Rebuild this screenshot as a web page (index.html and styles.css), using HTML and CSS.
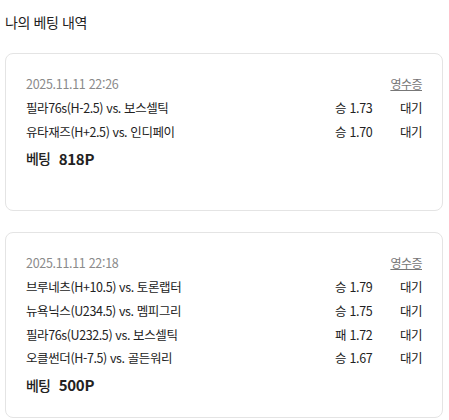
FILE: index.html
```html
<!DOCTYPE html>
<html lang="ko">
<head>
<meta charset="utf-8">
<link rel="stylesheet" href="styles.css">
</head>
<body>
<div class="page">
  <h1 class="title">나의 베팅 내역</h1>
  <div class="card card-min">
    <div class="head">
      <span class="date">2025.11.11 22:26</span>
      <span class="receipt">영수증</span>
    </div>
    <div class="row"><span class="match">필라76s(H-2.5) vs. 보스셀틱</span><span class="odds">승 1.73</span><span class="status">대기</span></div>
    <div class="row"><span class="match">유타재즈(H+2.5) vs. 인디페이</span><span class="odds">승 1.70</span><span class="status">대기</span></div>
    <div class="bet"><span class="bet-label">베팅</span><span class="bet-amount">818P</span></div>
  </div>
  <div class="card">
    <div class="head">
      <span class="date">2025.11.11 22:18</span>
      <span class="receipt">영수증</span>
    </div>
    <div class="row"><span class="match">브루네츠(H+10.5) vs. 토론랩터</span><span class="odds">승 1.79</span><span class="status">대기</span></div>
    <div class="row"><span class="match">뉴욕닉스(U234.5) vs. 멤피그리</span><span class="odds">승 1.75</span><span class="status">대기</span></div>
    <div class="row"><span class="match">필라76s(U232.5) vs. 보스셀틱</span><span class="odds">패 1.72</span><span class="status">대기</span></div>
    <div class="row"><span class="match">오클썬더(H-7.5) vs. 골든워리</span><span class="odds">승 1.67</span><span class="status">대기</span></div>
    <div class="bet"><span class="bet-label">베팅</span><span class="bet-amount">500P</span></div>
  </div>
</div>
</body>
</html>
```
FILE: styles.css
```css
* { box-sizing: border-box; }
body {
  margin: 0;
  background: #fff;
  font-family: "Noto Sans CJK KR", sans-serif;
  color: #222;
}
.page {
  padding: 11px 6px 0 5px;
}
.title {
  margin: 0 0 20px;
  font-size: 14px;
  font-weight: 400;
  line-height: 22px;
  letter-spacing: -0.4px;
  color: #222;
}
.card {
  border: 1px solid #e4e4e4;
  border-radius: 8px;
  padding: 19px 20px 18px 20px;
  margin-bottom: 21px;
}
.card-min {
  min-height: 158px;
}
.head {
  display: flex;
  justify-content: space-between;
  align-items: center;
  height: 20px;
  margin-bottom: 3px;
}
.date {
  font-size: 12.5px;
  letter-spacing: -0.3px;
  color: #8a8a8a;
}
.receipt {
  font-size: 12px;
  letter-spacing: -0.5px;
  color: #777;
  text-decoration: underline;
}
.row {
  display: grid;
  grid-template-columns: 1fr 65px auto;
  align-items: center;
  height: 23.7px;
  font-size: 12.5px;
  letter-spacing: -0.4px;
  white-space: nowrap;
}
.odds {
  letter-spacing: -0.3px;
}
.status {
  text-align: right;
  letter-spacing: -0.5px;
}
.bet {
  display: flex;
  align-items: center;
  height: 28px;
  margin-top: 1px;
  font-size: 15px;
}
.bet-label {
  font-weight: 500;
  font-size: 14px;
  letter-spacing: -1px;
  margin-right: 9px;
}
.bet-amount {
  font-weight: 700;
  letter-spacing: -0.3px;
}
```
